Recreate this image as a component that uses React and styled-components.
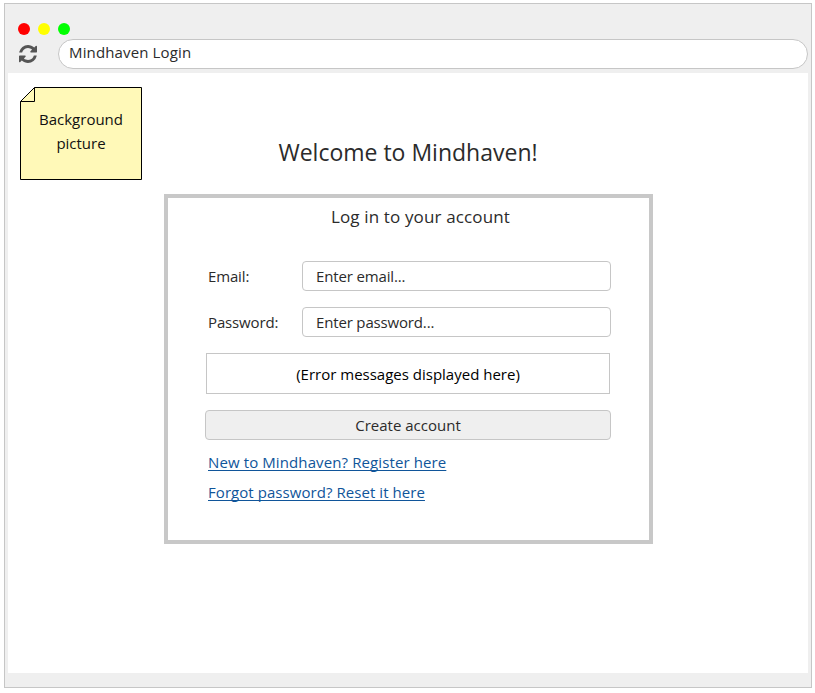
import React from 'react';
import styled, { createGlobalStyle } from 'styled-components';

const GlobalStyle = createGlobalStyle`
  * { box-sizing: border-box; }
  body {
    margin: 0;
    background: #fff;
    font-family: "Segoe UI", "Open Sans", "Noto Sans", sans-serif;
    font-size: 15px;
    color: #2b2b2b;
    overflow: hidden;
  }
`;

const BrowserWindow = styled.div`
  width: 808px;
  height: 685px;
  margin: 3px 0 0 4px;
  padding: 0 3px;
  background: #efefef;
  border: 1px solid #c6c6c6;
`;

const WindowControls = styled.div`
  display: flex;
  gap: 8px;
  padding: 19px 0 0 10px;
`;

const Dot = styled.span`
  width: 12px;
  height: 12px;
  border-radius: 50%;
  background: ${(p) => p.$color};
`;

const Toolbar = styled.div`
  display: flex;
  align-items: center;
  height: 30px;
  margin-top: 4px;
`;

const RefreshIcon = styled.svg`
  width: 18px;
  height: 18px;
  margin: 0 21px 0 11px;
  fill: #555;
`;

const Text = styled.span`
  white-space: nowrap;
  letter-spacing: ${(p) => p.$spacing || 0}px;
`;

const AddressBar = styled.div`
  flex: 1;
  height: 30px;
  padding-left: 10px;
  line-height: 25px;
  background: #fff;
  border: 1px solid #c6c6c6;
  border-radius: 15px;
`;

const Page = styled.main`
  display: grid;
  grid-template-columns: 156px 489px;
  align-items: start;
  height: 600px;
  margin-top: 4px;
  background: #fff;
`;

const Note = styled.aside`
  display: grid;
  width: 122px;
  height: 93px;
  margin: 14px 0 0 12px;
  color: #111;
  > * { grid-area: 1 / 1; }
`;

const NoteText = styled.div`
  display: flex;
  flex-direction: column;
  align-items: center;
  padding-top: 20px;
  line-height: 24px;
`;

const Content = styled.div`
  display: flex;
  flex-direction: column;
`;

const Title = styled.h1`
  margin: 59px 1px 0 0;
  height: 62px;
  line-height: 40px;
  font-size: 23px;
  font-weight: 400;
  text-align: center;
`;

const Card = styled.section`
  height: 350px;
  padding: 0 38px 0 37px;
  border: 4px solid #c8c8c8;
`;

const CardTitle = styled.h2`
  margin: 0 0 23px 25px;
  height: 40px;
  line-height: 38px;
  font-size: 17px;
  font-weight: 400;
  text-align: center;
`;

const Field = styled.label`
  display: grid;
  grid-template-columns: 97px 309px;
  height: 30px;
  margin-bottom: 16px;
  line-height: 30px;
  > :first-child { padding-left: 3px; }
`;

const Input = styled.div`
  height: 30px;
  padding-left: 13px;
  line-height: 28px;
  background: #fff;
  border: 1px solid #c6c6c6;
  border-radius: 4px;
`;

const ErrorBox = styled.div`
  height: 41px;
  margin: 0 1px 16px;
  line-height: 41px;
  text-align: center;
  color: #000;
  border: 1px solid #c6c6c6;
`;

const Button = styled.button`
  display: block;
  width: 406px;
  height: 30px;
  padding: 0;
  font: inherit;
  line-height: 28px;
  color: inherit;
  background: #efefef;
  border: 1px solid #c6c6c6;
  border-radius: 4px;
`;

const Links = styled.nav`
  display: flex;
  flex-direction: column;
  align-items: flex-start;
  padding: 7px 0 0 3px;
  line-height: 30px;
`;

const Link = styled.a`
  color: #10559a;
  white-space: nowrap;
  letter-spacing: ${(p) => p.$spacing || 0}px;
  text-decoration: underline;
  text-decoration-thickness: 1px;
  text-underline-offset: 2px;
  text-decoration-skip-ink: none;
`;

export default function App() {
  return (
    <>
      <GlobalStyle />
      <BrowserWindow>
        <WindowControls>
          <Dot $color="#ff0000" />
          <Dot $color="#ffff00" />
          <Dot $color="#00ff00" />
        </WindowControls>
        <Toolbar>
          <RefreshIcon viewBox="0 0 1536 1536">
            <path d="M1511 928q0 5-1 7-64 268-268 434.5t-478 166.5q-146 0-282.5-55t-243.5-157l-129 129q-19 19-45 19t-45-19-19-45v-448q0-26 19-45t45-19h448q26 0 45 19t19 45-19 45l-137 137q71 66 161 102t187 36q134 0 250-65t186-179q11-17 53-117 8-23 30-23h192q13 0 22.5 9.5t9.5 22.5zm25-800v448q0 26-19 45t-45 19h-448q-26 0-45-19t-19-45 19-45l138-138q-148-137-349-137-134 0-250 65t-186 179q-11 17-53 117-8 23-30 23h-199q-13 0-22.5-9.5t-9.5-22.5v-7q65-268 270-434.5t480-166.5q146 0 284 55.5t245 156.5l130-129q19-19 45-19t45 19 19 45z" />
          </RefreshIcon>
          <AddressBar><Text $spacing={0.14}>Mindhaven Login</Text></AddressBar>
        </Toolbar>
        <Page>
          <Note>
            <svg width="122" height="93" viewBox="0 0 122 93">
              <path d="M14.5 .5H121.5V92.5H.5V14.5Z" fill="#fff9b8" stroke="#000" />
              <path d="M14.5 .5V14.5H.5" fill="none" stroke="#000" />
            </svg>
            <NoteText>
              <Text>Background</Text>
              <Text>picture</Text>
            </NoteText>
          </Note>
          <Content>
            <Title><Text>Welcome to Mindhaven!</Text></Title>
            <Card>
              <CardTitle><Text $spacing={0.14}>Log in to your account</Text></CardTitle>
              <Field>
                <Text $spacing={-0.15}>Email:</Text>
                <Input><Text $spacing={-0.14}>Enter email...</Text></Input>
              </Field>
              <Field>
                <Text $spacing={-0.14}>Password:</Text>
                <Input><Text $spacing={-0.16}>Enter password...</Text></Input>
              </Field>
              <ErrorBox><Text>(Error messages displayed here)</Text></ErrorBox>
              <Button><Text>Create account</Text></Button>
              <Links>
                <Link href="#register" $spacing={0.11}>New to Mindhaven? Register here</Link>
                <Link href="#reset" $spacing={0.06}>Forgot password? Reset it here</Link>
              </Links>
            </Card>
          </Content>
        </Page>
      </BrowserWindow>
    </>
  );
}
